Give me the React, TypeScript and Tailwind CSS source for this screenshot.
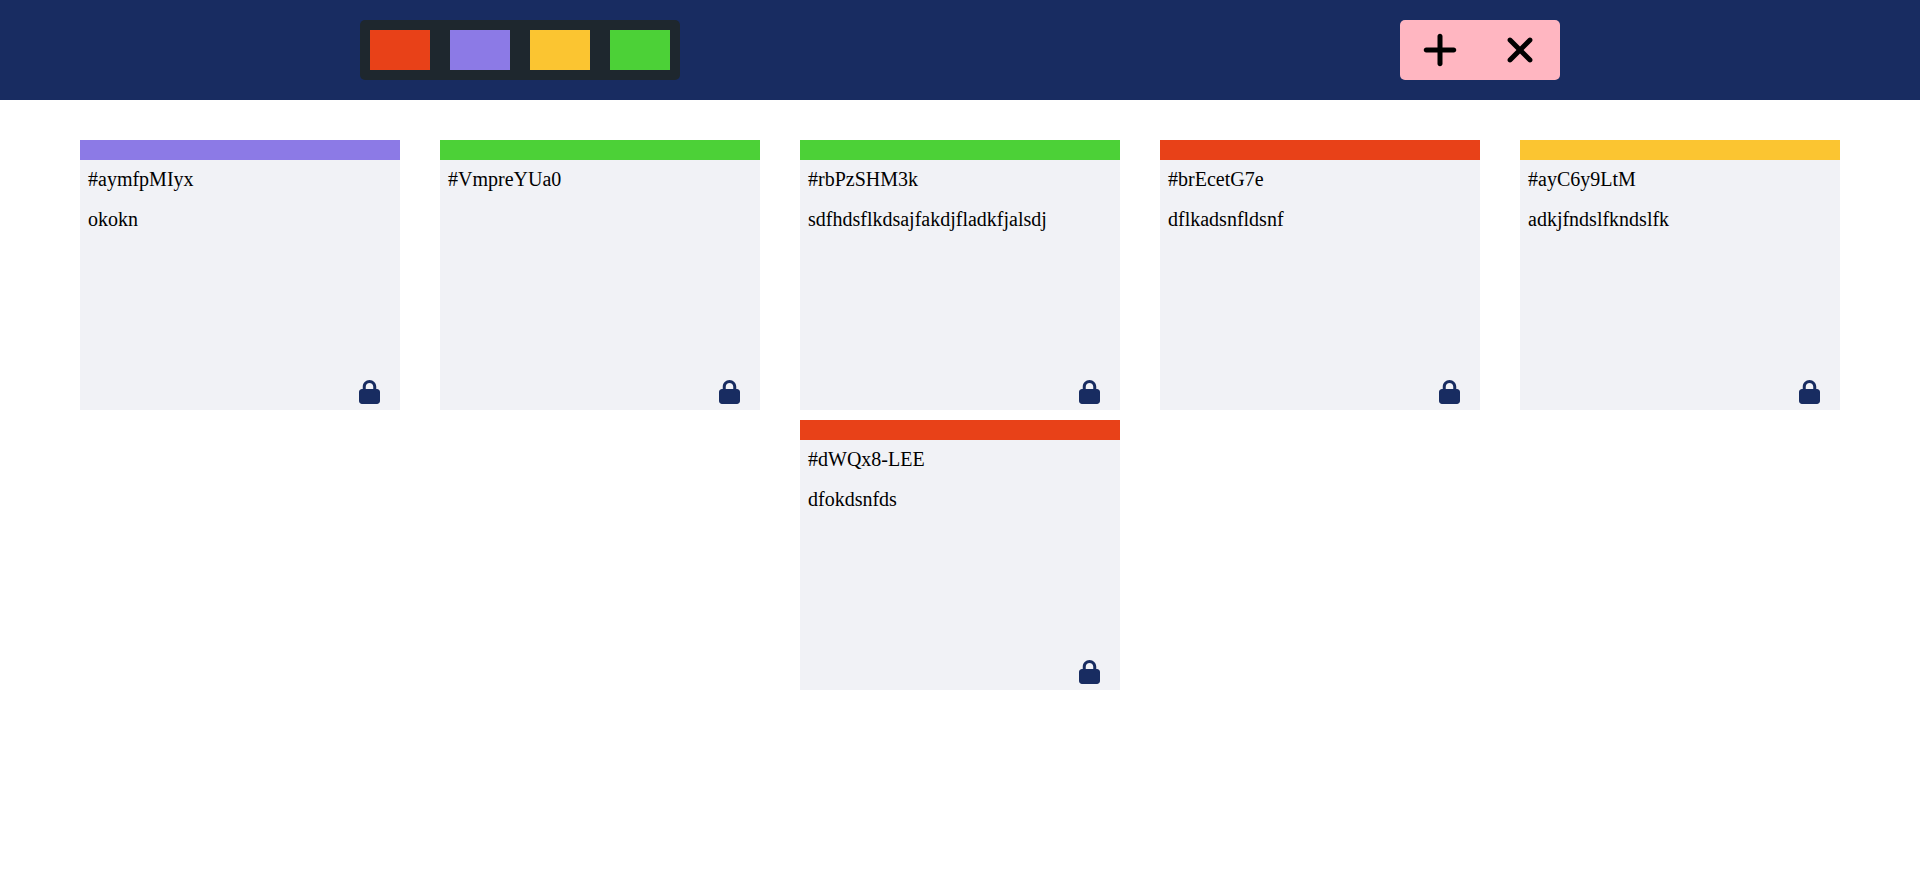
import { useState } from "react";
import { FaLock, FaPlus, FaXmark } from "react-icons/fa6";

const colors = {
  red: "bg-[#e84118]",
  purple: "bg-[#8c7ae6]",
  yellow: "bg-[#fbc531]",
  green: "bg-[#4cd137]",
};

type Color = keyof typeof colors;

interface Ticket {
  id: string;
  task: string;
  color: Color;
}

const tickets: Ticket[] = [
  { id: "aymfpMIyx", task: "okokn", color: "purple" },
  { id: "VmpreYUa0", task: "", color: "green" },
  { id: "rbPzSHM3k", task: "sdfhdsflkdsajfakdjfladkfjalsdj", color: "green" },
  { id: "brEcetG7e", task: "dflkadsnfldsnf", color: "red" },
  { id: "ayC6y9LtM", task: "adkjfndslfkndslfk", color: "yellow" },
  { id: "dWQx8-LEE", task: "dfokdsnfds", color: "red" },
];

function TicketCard({ id, task, color }: Ticket) {
  return (
    <article className="flex h-[270px] w-80 flex-col bg-[#f1f2f6]">
      <div className={`h-5 ${colors[color]}`} />
      <h2 className="h-10 px-2 pt-[5px]">#{id}</h2>
      <p className="h-10 px-2 pt-[5px]">{task}</p>
      <button
        type="button"
        aria-label={`Unlock ticket ${id}`}
        className="mt-auto mr-5 mb-1.5 self-end text-[#182c61]"
      >
        <FaLock className="h-6 w-[21px]" />
      </button>
    </article>
  );
}

export default function App() {
  const [filter, setFilter] = useState<Color | null>(null);
  const visible = tickets.filter((t) => !filter || t.color === filter);

  return (
    <div className="font-['Liberation_Serif',serif] text-xl text-black">
      <header className="flex h-[100px] items-center justify-around bg-[#182c61]">
        <div className="flex gap-5 rounded-[5px] bg-[#1e272e] p-2.5">
          {(Object.keys(colors) as Color[]).map((c) => (
            <button
              key={c}
              type="button"
              aria-label={`Show ${c} tickets`}
              onClick={() => setFilter(filter === c ? null : c)}
              className={`h-10 w-15 ${colors[c]}`}
            />
          ))}
        </div>
        <div className="flex h-15 rounded-[5px] bg-[#ffb6c1]">
          <button type="button" aria-label="Add ticket" className="flex w-20 items-center justify-center">
            <FaPlus size={40} />
          </button>
          <button type="button" aria-label="Remove tickets" className="flex w-20 items-center justify-center">
            <FaXmark size={40} />
          </button>
        </div>
      </header>
      <main className="flex flex-wrap justify-evenly gap-y-2.5 p-10">
        {visible.map((t) => (
          <TicketCard key={t.id} {...t} />
        ))}
      </main>
    </div>
  );
}
